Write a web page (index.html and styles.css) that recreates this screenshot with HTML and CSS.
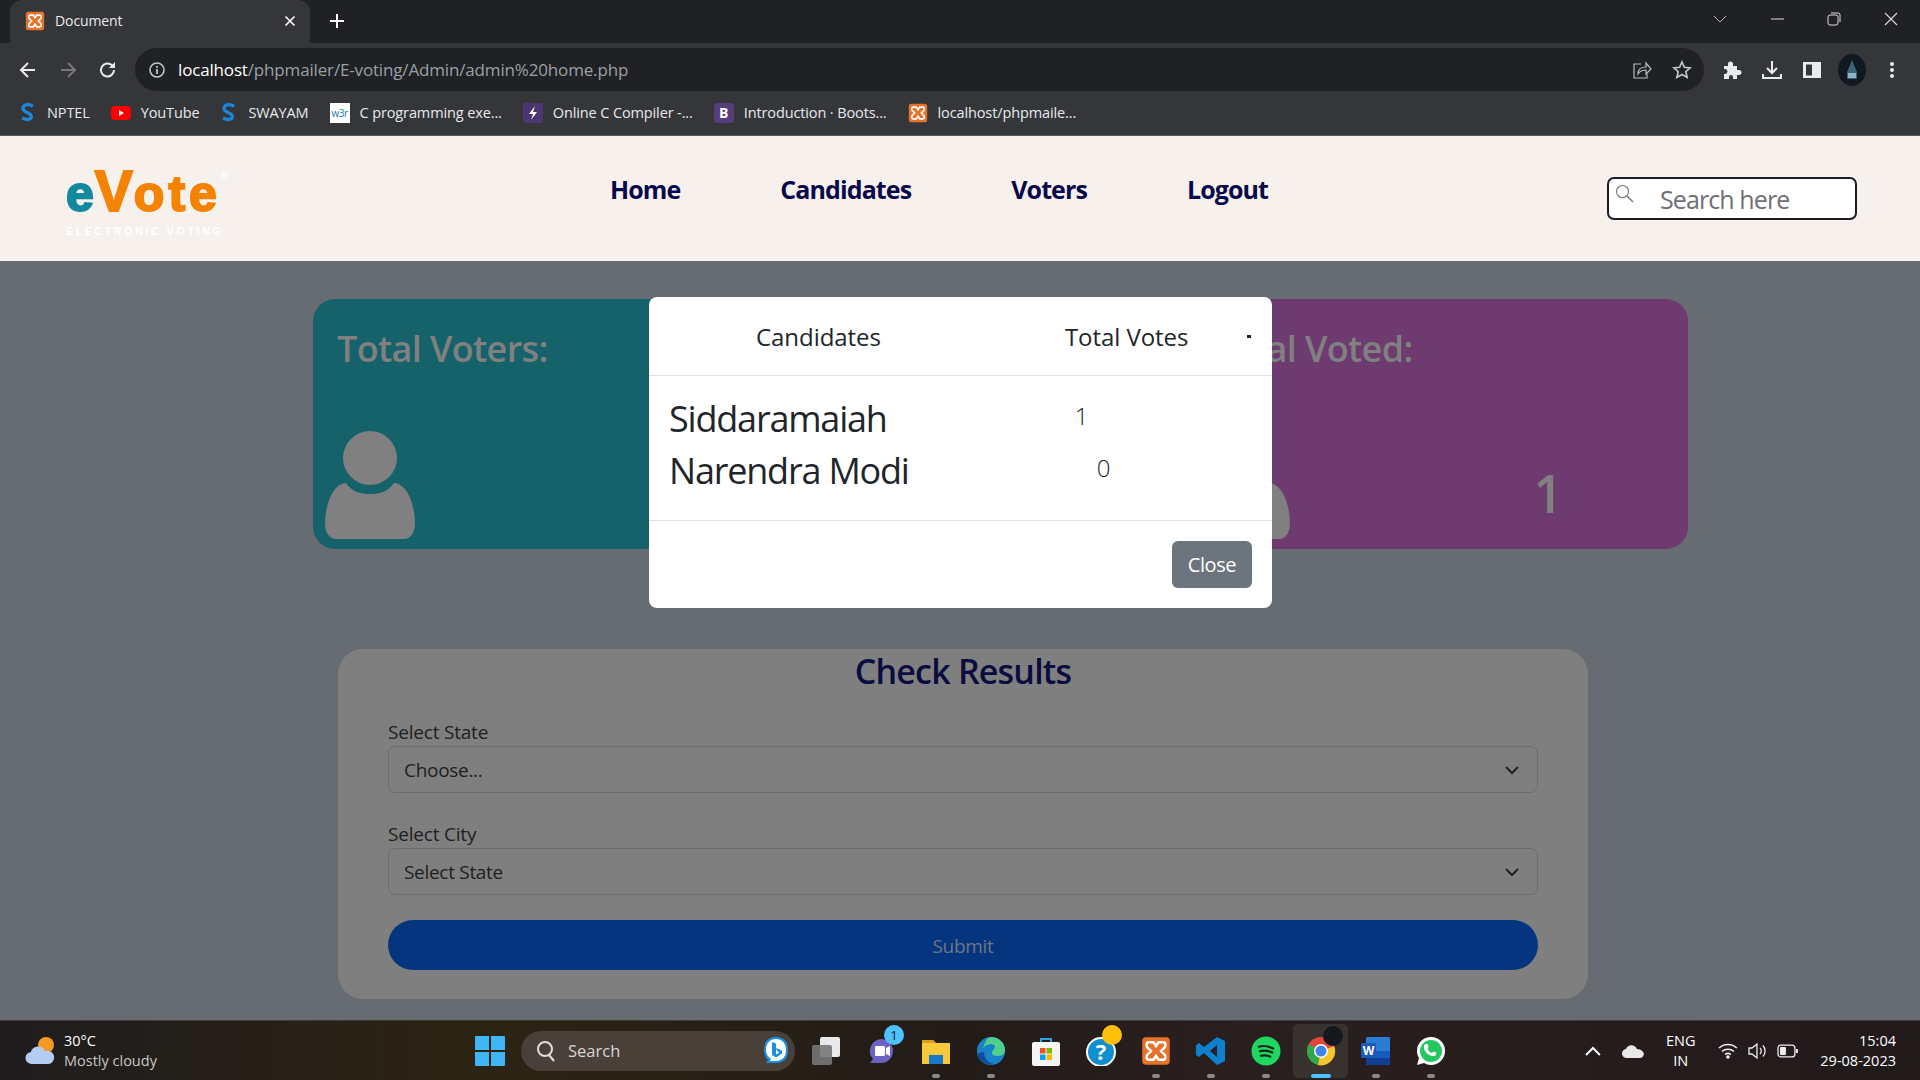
FILE: index.html
```html
<!DOCTYPE html>
<html lang="en">
<head>
  <meta charset="UTF-8">
  <title>Document</title>
  <link rel="stylesheet" href="styles.css">
</head>
<body>
  <svg class="defs" width="0" height="0">
    <symbol id="xampp" viewBox="0 0 24 24">
      <rect x="1" y="1" width="22" height="22" rx="3" fill="#e8722a"/>
      <path d="M6 5h4l2 3 2-3h4c2 0 2 4 0 5l-2 2 2 2c2 1 2 5 0 5h-4l-2-3-2 3H6c-2 0-2-4 0-5l2-2-2-2C4 9 4 5 6 5z" fill="none" stroke="#fff" stroke-width="2"/>
    </symbol>
    <symbol id="swayam" viewBox="0 0 20 24">
      <path d="M16 4C12 1 5 1 4 6c-1 6 11 5 10 11-1 4-7 3-11 1" fill="none" stroke="#1c86d8" stroke-width="4"/>
    </symbol>
  </svg>

  <!-- browser chrome -->
  <div class="tabstrip">
    <div class="tab">
      <svg class="fav" width="20" height="20"><use href="#xampp"/></svg>
      <span class="tab-title">Document</span>
      <svg class="tab-x" width="14" height="14" viewBox="0 0 14 14"><path d="M2.5 2.5l9 9M11.5 2.5l-9 9" stroke="#fff" stroke-width="1.6"/></svg>
    </div>
    <svg class="tab-new" width="18" height="18" viewBox="0 0 18 18"><path d="M9 2v14M2 9h14" stroke="#fff" stroke-width="2"/></svg>
    <div class="win-ctrls">
      <svg width="14" height="14" viewBox="0 0 14 14"><path d="M1 4l6 6 6-6" fill="none" stroke="#bbb" stroke-width="1"/></svg>
      <svg width="14" height="14" viewBox="0 0 14 14"><path d="M1 7h13" stroke="#ddd" stroke-width="1"/></svg>
      <svg width="14" height="14" viewBox="0 0 14 14"><rect x="1" y="3" width="10" height="10" rx="2" fill="none" stroke="#ddd"/><path d="M4 1h7a2 2 0 0 1 2 2v7" fill="none" stroke="#ddd"/></svg>
      <svg width="14" height="14" viewBox="0 0 14 14"><path d="M1 1l12 12M13 1L1 13" stroke="#ddd" stroke-width="1.1"/></svg>
    </div>
  </div>

  <div class="toolbar">
    <div class="nav-btns">
      <svg width="20" height="20" viewBox="0 0 20 20"><path d="M17 10H4M10 3l-7 7 7 7" fill="none" stroke="#e8eaed" stroke-width="2"/></svg>
      <svg width="20" height="20" viewBox="0 0 20 20"><path d="M3 10h13M10 3l7 7-7 7" fill="none" stroke="#75777b" stroke-width="2"/></svg>
      <svg width="20" height="20" viewBox="0 0 20 20"><path d="M16 10a6.5 6.5 0 1 1-2-4.7L16 7" fill="none" stroke="#e8eaed" stroke-width="2"/><path d="M17 2v6h-6z" fill="#e8eaed"/></svg>
    </div>
    <div class="omnibox">
      <svg class="info" width="18" height="18" viewBox="0 0 18 18"><circle cx="9" cy="9" r="7" fill="none" stroke="#c4c7c9" stroke-width="1.6"/><path d="M9 8v5M9 5v1.8" stroke="#c4c7c9" stroke-width="1.8"/></svg>
      <span class="url"><b>localhost</b>/phpmailer/E-voting/Admin/admin%20home.php</span>
      <svg class="share" width="20" height="20" viewBox="0 0 20 20"><path d="M9 4H2v14h13v-4" fill="none" stroke="#b9bbbe" stroke-width="1.2"/><path d="M6 14c0-5 3-7 8-7V3l5 6-5 5v-4c-4 0-6 1-8 4z" fill="none" stroke="#b9bbbe" stroke-width="1.2"/></svg>
      <svg class="star" width="20" height="20" viewBox="0 0 20 20"><path d="M10 2l2.4 5.3 5.7.6-4.3 3.8 1.3 5.7L10 14.500l-5.100 2.900 1.300-5.700L1.900 7.900l5.700-.6z" fill="none" stroke="#c4c7c9" stroke-width="1.7"/></svg>
    </div>
    <div class="tool-btns">
      <svg width="20" height="20" viewBox="0 0 20 20"><path d="M2 6h4V4a2.500 2.500 0 0 1 5 0v2h4v4h2a2.500 2.500 0 0 1 0 5h-2v4H11v-2a2 2 0 0 0-4 0v2H2v-5h1a2.500 2.500 0 0 0 0-5H2z" fill="#e8eaed"/></svg>
      <svg width="20" height="20" viewBox="0 0 20 20"><path d="M10 1v12M5 8l5 5 5-5M1 14v4h18v-4" fill="none" stroke="#e8eaed" stroke-width="2"/></svg>
      <svg width="20" height="20" viewBox="0 0 20 20"><path d="M1 2h18v16H1zM4 4.500v11h6v-11z" fill="#e8eaed" fill-rule="evenodd"/></svg>
      <svg class="avatar" width="28" height="32" viewBox="0 0 28 32"><ellipse cx="14" cy="16" rx="14" ry="16" fill="#111820"/><path d="M14 6l5 12v7H9v-7z" fill="#3b6478"/><path d="M10 19h8v5h-8z" fill="#8fb3c4"/></svg>
      <svg width="20" height="20" viewBox="0 0 20 20"><circle cx="10" cy="4" r="2" fill="#e8eaed"/><circle cx="10" cy="10" r="2" fill="#e8eaed"/><circle cx="10" cy="16" r="2" fill="#e8eaed"/></svg>
    </div>
  </div>

  <div class="bookmarks">
    <div class="bm"><svg width="18" height="20"><use href="#swayam"/></svg><span>NPTEL</span></div>
    <div class="bm"><svg width="20" height="20" viewBox="0 0 20 20"><rect y="3" width="20" height="14" rx="4" fill="#f00"/><path d="M8 7l5 3-5 3z" fill="#fff"/></svg><span>YouTube</span></div>
    <div class="bm"><svg width="18" height="20"><use href="#swayam"/></svg><span>SWAYAM</span></div>
    <div class="bm"><span class="w3r">w3r</span><span>C programming exe...</span></div>
    <div class="bm"><svg width="20" height="20" viewBox="0 0 20 20"><rect width="20" height="20" rx="2" fill="#4b3671"/><path d="M12 3l-6 8h4l-2 6 6-8h-4z" fill="#fff"/></svg><span>Online C Compiler -...</span></div>
    <div class="bm"><span class="bs">B</span><span>Introduction · Boots...</span></div>
    <div class="bm"><svg width="20" height="20"><use href="#xampp"/></svg><span>localhost/phpmaile...</span></div>
  </div>

  <!-- site -->
  <header class="site-head">
    <div class="logo">
      <div class="logo-word"><span class="logo-e">e</span><span class="logo-v">V</span><span class="logo-ote">ote</span><span class="logo-reg">®</span></div>
      <div class="logo-sub">ELECTRONIC VOTING</div>
    </div>
    <nav class="site-nav">
      <a>Home</a>
      <a>Candidates</a>
      <a>Voters</a>
      <a>Logout</a>
    </nav>
    <div class="search">
      <svg class="search-ico" width="19" height="19" viewBox="0 0 19 19"><circle cx="7.500" cy="7.500" r="6" fill="none" stroke="#777" stroke-width="1.100"/><path d="M12 12l6 6" stroke="#777" stroke-width="1.500"/></svg>
      <span class="search-ph">Search here</span>
    </div>
  </header>

  <main class="page">
    <div class="cards">
      <section class="card card-teal">
        <h3>Total Voters:</h3>
        <div class="card-bottom">
          <svg class="person" width="92" height="108" viewBox="0 0 92 108"><ellipse cx="46" cy="27" rx="27" ry="27"/><path d="M22 52c6 9 15 11 24 11s18-2 24-11c10 0 20 14 21 40 0 9-4 16-11 16H12C5 108 1 101 1 92c1-26 11-40 21-40z"/></svg>
        </div>
      </section>
      <section class="card card-purple">
        <h3>Total Voted:</h3>
        <div class="card-bottom">
          <svg class="person" width="92" height="108" viewBox="0 0 92 108"><ellipse cx="46" cy="27" rx="27" ry="27"/><path d="M22 52c6 9 15 11 24 11s18-2 24-11c10 0 20 14 21 40 0 9-4 16-11 16H12C5 108 1 101 1 92c1-26 11-40 21-40z"/></svg>
          <span class="card-num">1</span>
        </div>
      </section>
    </div>

    <section class="results">
      <h2>Check Results</h2>
      <label>Select State</label>
      <div class="select">Choose...<svg width="16" height="16" viewBox="0 0 16 16"><path d="M2 5l6 6 6-6" fill="none" stroke="#222" stroke-width="2"/></svg></div>
      <label class="label-city">Select City</label>
      <div class="select">Select State<svg width="16" height="16" viewBox="0 0 16 16"><path d="M2 5l6 6 6-6" fill="none" stroke="#222" stroke-width="2"/></svg></div>
      <div class="submit">Submit</div>
    </section>

    <div class="modal">
      <div class="modal-head">
        <span class="th-cand">Candidates</span>
        <span class="th-votes">Total Votes</span>
        <i class="modal-dot"></i>
      </div>
      <div class="modal-body">
        <div class="row"><span class="name">Siddaramaiah</span><span class="count">1</span></div>
        <div class="row"><span class="name">Narendra Modi</span><span class="count">0</span></div>
      </div>
      <div class="modal-foot"><button class="close-btn">Close</button></div>
    </div>
  </main>

  <!-- windows taskbar -->
  <footer class="taskbar">
    <div class="weather">
      <svg width="34" height="30" viewBox="0 0 34 30"><circle cx="22" cy="9" r="8" fill="#f59b23"/><path d="M8 28a6 6 0 0 1-1-12c1-6 11-8 14-1 7-1 10 4 9 8-1 3-3 5-6 5z" fill="#b5cdf0"/></svg>
      <div class="weather-txt"><span>30°C</span><span class="dim">Mostly cloudy</span></div>
    </div>
    <div class="tb-slot">
      <svg width="30" height="30" viewBox="0 0 30 30"><path d="M0 1a1 1 0 0 1 1-1h13v14H0zM16 0h13a1 1 0 0 1 1 1v13H16zM0 16h14v14H1a1 1 0 0 1-1-1zM16 16h14v13a1 1 0 0 1-1 1H16z" fill="#3fb6f5"/></svg>
    </div>
    <div class="tb-search">
      <svg width="20" height="22" viewBox="0 0 20 22"><circle cx="9" cy="9" r="7" fill="none" stroke="#ddd" stroke-width="2"/><path d="M13 15l5 6" stroke="#ddd" stroke-width="2"/></svg>
      <span>Search</span>
      <svg class="bing" width="26" height="30" viewBox="0 0 26 30"><path d="M13 1c8 0 12 5 12 13s-4 13-12 13H3l2-3C2 21 1 18 1 14 1 6 5 1 13 1z" fill="#1a8fe3"/><path d="M13 3c6 0 10 4 10 11s-4 11-10 11H7l1-2c-3-2-5-5-5-9C3 7 7 3 13 3z" fill="#fff"/><path d="M9 6l4 1.500v11l3.500-2-2.500-1.500-1-3 6 2.500v3l-6 4-4-2.500z" fill="#1a8fe3"/></svg>
    </div>
    <div class="tb-slot">
      <svg width="30" height="30" viewBox="0 0 30 30"><rect x="9" y="1" width="20" height="20" rx="2" fill="#e9e9e9"/><rect x="1" y="9" width="20" height="20" rx="2" fill="#777" opacity=".9"/></svg>
    </div>
    <div class="tb-slot tb-badge">
      <svg width="30" height="30" viewBox="0 0 30 30"><path d="M15 3a12 12 0 0 1 0 24H4l3-4a12 12 0 0 1 8-20z" fill="#6c62c4"/><rect x="9" y="10" width="10" height="10" rx="1" fill="#fff"/><path d="M20 12l4-2v10l-4-2z" fill="#fff"/></svg>
      <span class="badge-num">1</span>
    </div>
    <div class="tb-slot tb-open">
      <svg width="30" height="30" viewBox="0 0 30 30"><path d="M1 4h11l3 3h14v21H1z" fill="#f7c93b"/><path d="M1 4h11l3 3H1z" fill="#d99f1f"/><rect x="8" y="19" width="14" height="9" fill="#1878c8"/></svg>
    </div>
    <div class="tb-slot tb-open">
      <svg width="30" height="30" viewBox="0 0 30 30"><circle cx="15" cy="15" r="14" fill="#1782c8"/><path d="M15 1c8 0 14 6 14 13 0 5-4 6-8 6-3 0-5-1-5-3 0-3 3-4 3-7-2-3-9-2-12 2C9 6 11 1 15 1z" fill="#4fd08f"/><path d="M8 16c0 6 4 11 10 12-7 2-15-2-17-9 1-2 4-3 7-3z" fill="#0f4f9a"/></svg>
    </div>
    <div class="tb-slot">
      <svg width="30" height="30" viewBox="0 0 30 30"><path d="M10 7V3h10v4" fill="none" stroke="#2aa3e0" stroke-width="2"/><rect x="1" y="6" width="28" height="24" rx="2" fill="#f5f5f5"/><rect x="9" y="12" width="5.500" height="5.500" fill="#f25022"/><rect x="15.500" y="12" width="5.500" height="5.500" fill="#7fba00"/><rect x="9" y="18.500" width="5.500" height="5.500" fill="#00a4ef"/><rect x="15.500" y="18.500" width="5.500" height="5.500" fill="#ffb900"/></svg>
    </div>
    <div class="tb-slot tb-badge">
      <svg width="30" height="30" viewBox="0 0 30 30"><circle cx="15" cy="16" r="14" fill="#0f8fcf" stroke="#fff" stroke-width="2"/><text x="15" y="24" class="help-q">?</text></svg>
      <i class="badge-yellow"></i>
    </div>
    <div class="tb-slot tb-open">
      <svg width="30" height="30"><use href="#xampp"/></svg>
    </div>
    <div class="tb-slot tb-open">
      <svg width="30" height="30" viewBox="0 0 30 30"><path d="M21 1l8 4v20l-8 4-13-12-5 4-3-2v-10l3-2 5 4zM21 9l-7 6 7 6z" fill="#0f7fd0" fill-rule="evenodd"/></svg>
    </div>
    <div class="tb-slot tb-open">
      <svg width="30" height="30" viewBox="0 0 30 30"><circle cx="15" cy="15" r="14.500" fill="#1ed760"/><path d="M7 11c6-2 11-1 16 2M8 15.500c5-1.500 10-1 14 1.500M9 20c4-1 8-.5 11 1" fill="none" stroke="#14241a" stroke-width="2.200"/></svg>
    </div>
    <div class="tb-slot tb-active">
      <svg width="30" height="30" viewBox="0 0 30 30"><circle cx="15" cy="15" r="14" fill="#e2463a"/><path d="M15 15L3 8A14 14 0 0 0 12 29z" fill="#2fa84f"/><path d="M15 15l-3 14A14 14 0 0 0 28 10z" fill="#f7c52c"/><circle cx="15" cy="15" r="7" fill="#fff"/><circle cx="15" cy="15" r="5.500" fill="#3f84e8"/></svg>
      <i class="avatar-mini"></i>
    </div>
    <div class="tb-slot tb-open">
      <svg width="30" height="30" viewBox="0 0 30 30"><rect x="5" y="1" width="24" height="28" rx="1" fill="#2b7cd3"/><rect x="5" y="15" width="24" height="7" fill="#185abd"/><rect x="5" y="22" width="24" height="7" fill="#103f91"/><rect x="0" y="7" width="15" height="15" rx="1" fill="#1a5bb8"/><text x="7.500" y="19" class="word-w">W</text></svg>
    </div>
    <div class="tb-slot tb-open">
      <svg width="30" height="30" viewBox="0 0 30 30"><path d="M15 1a14 14 0 0 1 0 28c-3 0-5-1-7-2l-7 2 2-7C2 20 1 18 1 15A14 14 0 0 1 15 1z" fill="#fff"/><circle cx="15" cy="15" r="11" fill="#25c65f"/><path d="M10 8c2-1 3 3 2 4s1 4 4 5c1-1 3-2 4 0s-1 3-3 3c-5 0-10-6-9-10 0-1 1-2 2-2z" fill="#fff"/></svg>
    </div>

    <div class="tray">
      <svg width="16" height="10" viewBox="0 0 16 10"><path d="M1 9l7-7 7 7" fill="none" stroke="#fff" stroke-width="2"/></svg>
      <svg width="22" height="14" viewBox="0 0 22 14"><path d="M5 14a4.500 4.500 0 0 1-1-9C6 0 13 0 15 5c4 0 7 3 7 5s-2 4-4 4z" fill="#e8e8e8"/></svg>
      <div class="tray-lang"><span>ENG</span><span>IN</span></div>
      <svg width="20" height="16" viewBox="0 0 20 16"><path d="M1 5a13 13 0 0 1 18 0M4 8.500a9 9 0 0 1 12 0M7 11.500a5 5 0 0 1 6 0" fill="none" stroke="#eee" stroke-width="1.500"/><circle cx="10" cy="14" r="1.800" fill="#eee"/></svg>
      <svg class="tray-sm" width="20" height="18" viewBox="0 0 20 18"><path d="M1 6h3l5-4v14l-5-4H1z" fill="none" stroke="#eee" stroke-width="1.300"/><path d="M12 6a4 4 0 0 1 0 6M15 3.500a8 8 0 0 1 0 11" fill="none" stroke="#eee" stroke-width="1.300"/></svg>
      <svg class="tray-sm" width="22" height="14" viewBox="0 0 22 14"><rect x="1" y="1" width="17" height="12" rx="3" fill="none" stroke="#eee" stroke-width="1.300"/><rect x="3" y="3" width="6" height="8" rx="1" fill="#eee"/><rect x="19" y="5" width="2" height="4" fill="#eee"/></svg>
      <div class="clock"><span>15:04</span><span>29-08-2023</span></div>
    </div>
  </footer>
</body>
</html>
```

FILE: styles.css
```css
* { box-sizing: border-box; }
html, body {
  margin: 0;
  height: 100%;
}
body {
  width: 1920px;
  height: 1080px;
  overflow: hidden;
  display: flex;
  flex-direction: column;
  font-family: "Open Sans", "Noto Sans", sans-serif;
  background: #676b72;
}
.defs { position: absolute; }

/* tab strip */
.tabstrip {
  height: 43px;
  background: #202124;
  display: flex;
  align-items: flex-end;
  padding-left: 10px;
}
.tab {
  width: 300px;
  height: 43px;
  background: #35363a;
  border-radius: 12px 12px 0 0;
  display: flex;
  align-items: center;
  padding: 0 13px 2px 15px;
  color: #e8eaed;
  font-size: 14px;
  letter-spacing: -0.1px;
}
.tab-title { margin-left: 10px; flex: 1; }
.tab-new { margin: 0 0 13px 18px; }
.win-ctrls {
  margin-left: auto;
  height: 43px;
  display: flex;
  align-items: center;
  gap: 43px;
  padding: 0 22px 6px 0;
}

/* toolbar */
.toolbar {
  height: 48px;
  padding-top: 5px;
  background: #35363a;
  display: flex;
}
.nav-btns {
  width: 135px;
  height: 43px;
  display: flex;
  align-items: center;
  gap: 20px;
  padding-left: 18px;
}
.omnibox {
  width: 1569px;
  height: 43px;
  background: #202124;
  border-radius: 22px;
  display: flex;
  align-items: center;
  padding: 0 12px 0 13px;
}
.url {
  flex: 1;
  margin-left: 12px;
  font-size: 17px;
  letter-spacing: -0.16px;
  color: #9aa0a6;
}
.url b { font-weight: 400; color: #fff; }
.share { margin-right: 20px; }
.tool-btns {
  flex: 1;
  height: 43px;
  display: flex;
  align-items: center;
  gap: 20px;
  padding-left: 18px;
}
.avatar { margin: 0 -4px; }

/* bookmarks */
.bookmarks {
  height: 45px;
  padding: 0 0 1px 19px;
  background: #35363a;
  display: flex;
  align-items: center;
  gap: 21px;
  color: #e8eaed;
  font-size: 14.500px;
  letter-spacing: -0.12px;
  border-bottom: 1px solid #55565a;
}
.bm { display: flex; align-items: center; gap: 10px; }
.w3r {
  width: 20px;
  height: 20px;
  background: #fff;
  color: #1a73a8;
  font-size: 10px;
  line-height: 20px;
  text-align: center;
  letter-spacing: -0.5px;
}
.bs {
  width: 20px;
  height: 20px;
  background: #563d7c;
  border-radius: 3px;
  color: #fff;
  font-size: 14px;
  font-weight: 700;
  line-height: 20px;
  text-align: center;
}

/* site header */
.site-head {
  height: 125px;
  background: #f7f1ee;
  display: flex;
  padding-left: 66px;
}
.logo { width: 544px; padding-top: 30px; }
.logo-word {
  height: 50px;
  display: flex;
  align-items: baseline;
  font-family: "Liberation Sans", sans-serif;
  font-weight: 700;
  font-size: 50px;
  line-height: 50px;
  -webkit-text-stroke: 2px #f58200;
  color: #f58200;
}
.logo-e { color: #13899f; -webkit-text-stroke-color: #13899f; }
.logo-v { font-size: 57px; margin: 0 1px; }
.logo-ote { letter-spacing: 4px; }
.logo-reg {
  align-self: flex-start;
  font-size: 10px;
  line-height: 20px;
  color: #fff;
  -webkit-text-stroke: 0;
}
.logo-sub {
  margin-top: 9px;
  width: 160px;
  font-family: "Liberation Sans", sans-serif;
  font-size: 10.500px;
  font-weight: 700;
  letter-spacing: 2.700px;
  color: #fff;
  white-space: nowrap;
}
.site-nav {
  display: flex;
  gap: 100px;
  height: 106px;
  align-items: center;
  font-size: 25px;
  font-weight: 700;
  letter-spacing: -0.9px;
  color: #08084a;
}
.search {
  position: absolute;
  left: 1607px;
  top: 177px;
  width: 250px;
  height: 43px;
  background: #fff;
  border: 2px solid #1c1c28;
  border-radius: 7px;
  padding-left: 51px;
  font-size: 25px;
  line-height: 40px;
  letter-spacing: -0.9px;
  color: #6f6f76;
}
.search-ico { position: absolute; left: 6px; top: 5px; }

/* dimmed page */
.page {
  flex: 1;
  position: relative;
  background: #676b72;
}
.cards {
  width: 1375px;
  margin: 38px 0 0 313px;
  display: flex;
  justify-content: space-between;
}
.card {
  width: 500px;
  height: 250px;
  border-radius: 22px;
  padding: 26px 0 10px 24px;
  display: flex;
  flex-direction: column;
  justify-content: space-between;
}
.card-teal { background: #16626a; }
.card-purple { background: #6e3b70; }
.card h3 {
  margin: 0;
  font-size: 36px;
  line-height: 48px;
  font-weight: 600;
  letter-spacing: -0.65px;
  color: #808080;
}
.card-bottom {
  margin-left: -13px;
  display: flex;
  align-items: flex-end;
  justify-content: space-between;
  padding-right: 125px;
}
.person { fill: #808080; display: block; }
.card-num {
  font-size: 52px;
  line-height: 58px;
  font-weight: 600;
  color: #808080;
  margin-bottom: 17px;
}

.results {
  width: 1250px;
  height: 350px;
  margin: 100px 0 0 338px;
  padding: 0 50px;
  background: #7f7f7f;
  border-radius: 25px;
}
.results h2 {
  margin: 0;
  height: 48px;
  line-height: 44px;
  text-align: center;
  font-size: 34px;
  font-weight: 600;
  letter-spacing: -0.8px;
  color: #0b0b40;
}
.results label {
  display: block;
  margin-top: 22px;
  font-size: 19px;
  line-height: 27px;
  letter-spacing: -0.2px;
  color: #202020;
}
.results .label-city { margin-top: 28px; }
.select {
  height: 47px;
  border: 1px solid #6e6e6e;
  border-radius: 7px;
  padding: 0 17px 0 15px;
  display: flex;
  align-items: center;
  justify-content: space-between;
  font-size: 19px;
  letter-spacing: -0.3px;
  color: #202020;
}
.submit {
  height: 50px;
  margin-top: 25px;
  background: #06357f;
  border-radius: 25px;
  text-align: center;
  font-size: 19px;
  line-height: 52px;
  letter-spacing: -0.3px;
  color: #6d7685;
}

/* modal, sits over the page */
.modal {
  position: absolute;
  left: 649px;
  top: 36px;
  width: 623px;
  height: 311px;
  background: #fff;
  border-radius: 8px;
  color: #212529;
  display: flex;
  flex-direction: column;
}
.modal-head {
  height: 79px;
  padding-top: 1px;
  border-bottom: 1px solid #dee2e6;
  display: flex;
  align-items: center;
  font-size: 24px;
  letter-spacing: -0.05px;
  position: relative;
}
.th-cand { margin-left: 107px; }
.th-votes { margin-left: 184px; }
.modal-dot {
  position: absolute;
  left: 598px;
  top: 38px;
  width: 4px;
  height: 3px;
  background: #212529;
}
.modal-body {
  height: 145px;
  padding: 17px 0 0 20px;
  border-bottom: 1px solid #dee2e6;
}
.row {
  display: flex;
  gap: 188px;
  align-items: flex-start;
  height: 52px;
}
.name {
  font-size: 36px;
  line-height: 52px;
  letter-spacing: -1.2px;
}
.count {
  font-size: 24px;
  font-weight: 300;
  line-height: 46px;
}
.modal-foot {
  flex: 1;
  display: flex;
  justify-content: flex-end;
  padding: 20px 20px 0 0;
}
.close-btn {
  width: 80px;
  height: 47px;
  background: #6c757d;
  color: #fff;
  border: none;
  border-radius: 6px;
  font: inherit;
  font-size: 20px;
  letter-spacing: -0.4px;
}

/* taskbar */
.taskbar {
  height: 60px;
  background: linear-gradient(90deg, #1f1c1e, #2c2413 25%, #221c18 50%, #2a1f1f 65%, #211a1b);
  border-top: 1px solid #3d3a38;
  display: flex;
  align-items: center;
  color: #fff;
  font-size: 14.500px;
}
.weather {
  width: 462px;
  padding-left: 24px;
  display: flex;
  align-items: center;
  gap: 6px;
}
.weather-txt { display: flex; flex-direction: column; line-height: 20px; }
.dim { color: #c9c6c2; }
.tb-slot {
  width: 55px;
  height: 54px;
  display: flex;
  align-items: center;
  justify-content: center;
  position: relative;
}
.tb-search {
  width: 274px;
  height: 40px;
  margin: 0 3px 0 4px;
  padding: 0 6px 0 15px;
  background: #4a403a;
  border-radius: 20px;
  display: flex;
  align-items: center;
  gap: 12px;
  font-size: 16.500px;
  color: #d8d6d3;
}
.bing { margin-left: auto; }
.tb-open::after,
.tb-active::after {
  content: "";
  position: absolute;
  left: 50%;
  bottom: 0;
  width: 8px;
  height: 4px;
  margin-left: -4px;
  background: #8a8a8a;
  border-radius: 2px;
}
.tb-active {
  background: #38332f;
  border-radius: 5px;
}
.tb-active::after {
  width: 20px;
  margin-left: -10px;
  background: #4cc2ff;
}
.badge-num {
  position: absolute;
  right: 4px;
  top: 1px;
  width: 20px;
  height: 20px;
  background: #4cc2ff;
  border-radius: 50%;
  color: #10222c;
  font-size: 13px;
  line-height: 20px;
  text-align: center;
}
.badge-yellow {
  position: absolute;
  right: 6px;
  top: 1px;
  width: 20px;
  height: 20px;
  background: #fdbf0a;
  border-radius: 50%;
}
.avatar-mini {
  position: absolute;
  right: 5px;
  top: 2px;
  width: 20px;
  height: 20px;
  background: #14181d;
  border-radius: 50%;
}
.help-q {
  fill: #fff;
  font-size: 22px;
  font-weight: 700;
  text-anchor: middle;
}
.word-w {
  fill: #fff;
  font-size: 12px;
  font-weight: 700;
  text-anchor: middle;
}
.tray {
  margin-left: auto;
  width: 335px;
  padding-right: 24px;
  display: flex;
  align-items: center;
  gap: 21px;
}
.tray .tray-sm { margin-left: -11px; }
.tray-lang {
  width: 32px;
  display: flex;
  flex-direction: column;
  align-items: center;
  line-height: 20px;
}
.clock {
  margin-left: auto;
  display: flex;
  flex-direction: column;
  align-items: flex-end;
  line-height: 20px;
  white-space: nowrap;
}
```
